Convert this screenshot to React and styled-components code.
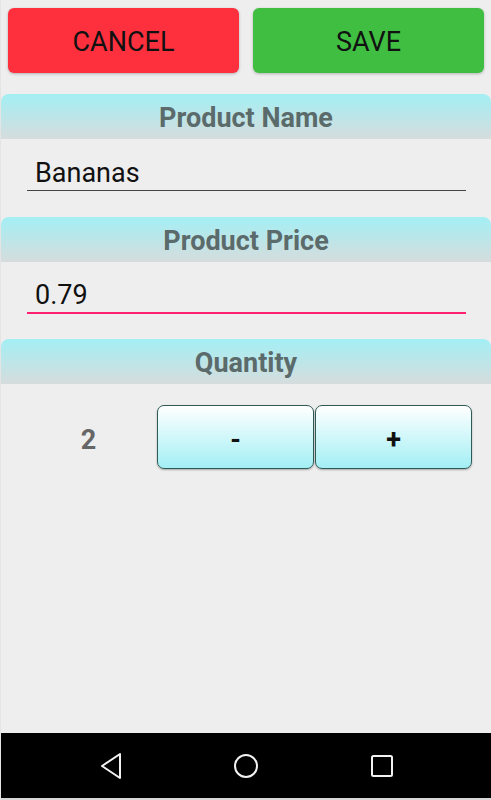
import React from 'react';
import styled, {createGlobalStyle} from 'styled-components';

const GlobalStyle = createGlobalStyle`
  body {
    margin: 0;
    background: #eeeeee;
    font-family: Roboto, "Liberation Sans", sans-serif;
  }
`;

const Screen = styled.div`
  display: flex;
  flex-direction: column;
  height: 800px;
  background: #eeeeee;
  border-left: 1px solid #e4e4e4;
  box-sizing: border-box;
`;

const Content = styled.div`
  flex: 1;
  display: flex;
  flex-direction: column;
`;

const ActionBar = styled.div`
  display: grid;
  grid-template-columns: 1fr 1fr;
  gap: 14px;
  padding: 8px 7px 0 7px;
`;

const ActionButton = styled.button`
  height: 65px;
  border: none;
  border-radius: 6px;
  background: ${p => p.$color};
  box-shadow: 0 1px 3px rgba(0, 0, 0, 0.25);
  font-family: Roboto, "Liberation Sans", sans-serif;
  font-size: 27px;
  color: #111;
  padding: 3px 0 0;
`;

const SectionHeader = styled.div`
  margin-top: ${p => p.$gap}px;
  height: 45px;
  display: flex;
  align-items: center;
  justify-content: center;
  padding-top: 3px;
  box-sizing: border-box;
  border-radius: 8px 8px 0 0;
  background: linear-gradient(#a3eff4, #d6dcdd);
  font-size: 27px;
  font-weight: 700;
  color: #5b6a6a;
`;

const Field = styled.div`
  margin: 0 25px 0 26px;
  height: 52px;
  display: flex;
  align-items: flex-end;
  padding: 0 0 1px 8px;
  box-sizing: border-box;
  border-bottom: ${p => (p.$focused ? '2px solid #ff2070' : '1px solid #444')};
  font-size: 27px;
  color: #111;
`;

const QuantityRow = styled.div`
  display: grid;
  grid-template-columns: 155px 157px 157px;
  column-gap: 1px;
  margin-top: 21px;
  height: 64px;
`;

const Count = styled.div`
  display: flex;
  align-items: center;
  justify-content: center;
  padding: 5px 0 0 20px;
  font-size: 27px;
  font-weight: 700;
  color: #666;
`;

const StepButton = styled.button`
  border: 1px solid #2f5a56;
  border-radius: 7px;
  background: linear-gradient(#ffffff, #a2eff4);
  box-shadow: 0 1px 2px rgba(0, 0, 0, 0.3);
  font-family: Roboto, "Liberation Sans", sans-serif;
  font-size: 27px;
  font-weight: 700;
  color: #111;
  padding: 5px 0 0;
`;

const NavBar = styled.div`
  height: 65px;
  background: #000;
  display: flex;
  align-items: center;
  justify-content: center;
  gap: 100px;
  border-bottom: 2px solid #d8d8d8;
`;

const NavIcon = styled.svg`
  width: 36px;
  height: 36px;
  fill: none;
  stroke: #f2f2f2;
  stroke-width: 2;
  stroke-linejoin: round;
`;

function App() {
  return (
    <Screen>
      <GlobalStyle />
      <Content>
        <ActionBar>
          <ActionButton $color="#ff303e">CANCEL</ActionButton>
          <ActionButton $color="#3fbe41">SAVE</ActionButton>
        </ActionBar>
        <SectionHeader $gap={21}>Product Name</SectionHeader>
        <Field>Bananas</Field>
        <SectionHeader $gap={26}>Product Price</SectionHeader>
        <Field $focused>0.79</Field>
        <SectionHeader $gap={25}>Quantity</SectionHeader>
        <QuantityRow>
          <Count>2</Count>
          <StepButton>-</StepButton>
          <StepButton>+</StepButton>
        </QuantityRow>
      </Content>
      <NavBar>
        <NavIcon viewBox="0 0 36 36">
          <path d="M28 6 L10 18 L28 30 Z" />
        </NavIcon>
        <NavIcon viewBox="0 0 36 36">
          <circle cx="18" cy="18" r="11" />
        </NavIcon>
        <NavIcon viewBox="0 0 36 36">
          <rect x="8" y="8" width="20" height="20" rx="1.5" />
        </NavIcon>
      </NavBar>
    </Screen>
  );
}

export default App;
